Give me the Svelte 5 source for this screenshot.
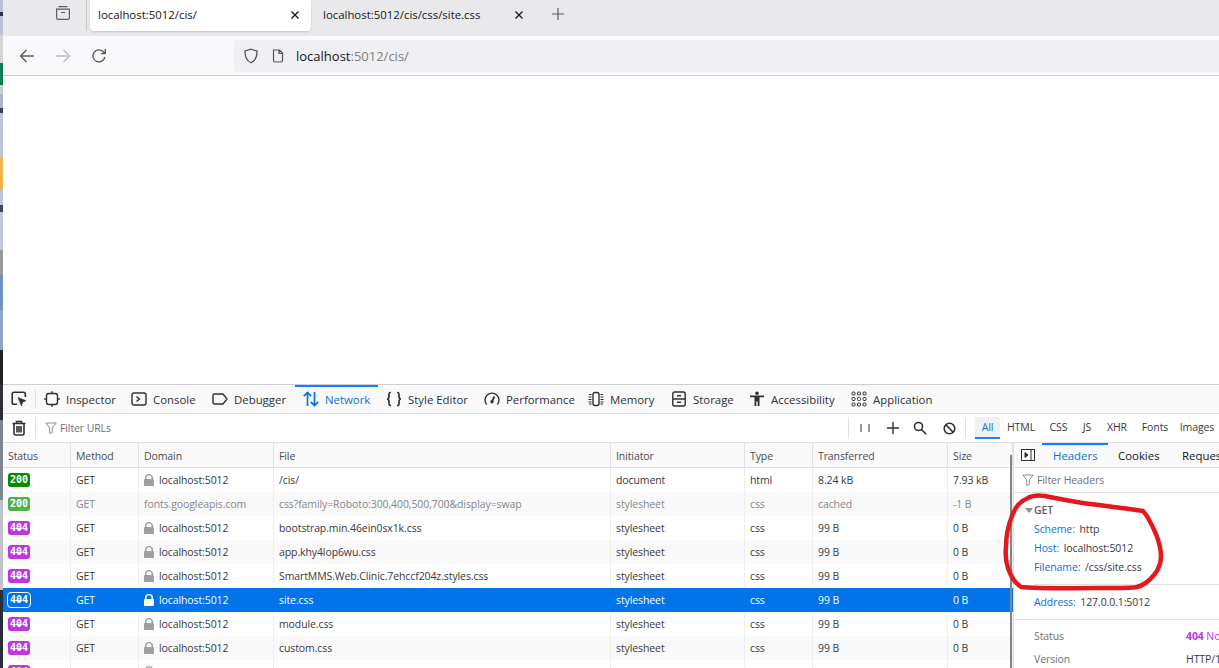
<script>
  const tools = [
    { n: 'Inspector', i: 'insp' }, { n: 'Console', i: 'cons' }, { n: 'Debugger', i: 'debug' },
    { n: 'Network', i: 'net', on: true }, { n: 'Style Editor', i: 'style' }, { n: 'Performance', i: 'perf' },
    { n: 'Memory', i: 'mem' }, { n: 'Storage', i: 'stor' }, { n: 'Accessibility', i: 'acc' }, { n: 'Application', i: 'app' }
  ];
  const filters = ['All', 'HTML', 'CSS', 'JS', 'XHR', 'Fonts', 'Images'];
  const cols = ['Status', 'Method', 'Domain', 'File', 'Initiator', 'Type', 'Transferred', 'Size'];
  const rows = [
    { s: '200', c: 'ok', d: 'localhost:5012', f: '/cis/', i: 'document', t: 'html', x: '8.24 kB', z: '7.93 kB' },
    { s: '200', c: 'okc', d: 'fonts.googleapis.com', f: 'css?family=Roboto:300,400,500,700&display=swap', i: 'stylesheet', t: 'css', x: 'cached', z: '-1 B', dim: true },
    { s: '404', c: 'nf', d: 'localhost:5012', f: 'bootstrap.min.46ein0sx1k.css', i: 'stylesheet', t: 'css', x: '99 B', z: '0 B' },
    { s: '404', c: 'nf', d: 'localhost:5012', f: 'app.khy4lop6wu.css', i: 'stylesheet', t: 'css', x: '99 B', z: '0 B' },
    { s: '404', c: 'nf', d: 'localhost:5012', f: 'SmartMMS.Web.Clinic.7ehccf204z.styles.css', i: 'stylesheet', t: 'css', x: '99 B', z: '0 B' },
    { s: '404', c: 'nf', d: 'localhost:5012', f: 'site.css', i: 'stylesheet', t: 'css', x: '99 B', z: '0 B', sel: true },
    { s: '404', c: 'nf', d: 'localhost:5012', f: 'module.css', i: 'stylesheet', t: 'css', x: '99 B', z: '0 B' },
    { s: '404', c: 'nf', d: 'localhost:5012', f: 'custom.css', i: 'stylesheet', t: 'css', x: '99 B', z: '0 B' },
    { s: '404', c: 'nf', d: 'localhost:5012', f: '', i: '', t: '', x: '', z: '', last: true }
  ];
</script>

<div class="screen">
  <div class="strip"></div>
  <div class="main">
    <div class="tabstrip">
      <svg class="archive" width="16" height="16" viewBox="0 0 16 16" fill="none" stroke="#5b5b66" stroke-width="1.2"><path d="M3.500 1.600h9M1.600 4.100h12.800v8.600a1.700 1.700 0 0 1-1.700 1.700H3.300a1.700 1.700 0 0 1-1.700-1.700zM6 7.500h4"/></svg>
      <div class="vsep"></div>
      <div class="tab active"><span>localhost:5012/cis/</span><svg width="10" height="10" viewBox="0 0 10 10" stroke="#15141a" stroke-width="1.3"><path d="M1.500 1.500l7 7M8.500 1.500l-7 7"/></svg></div>
      <div class="tab second"><span>localhost:5012/cis/css/site.css</span><svg width="10" height="10" viewBox="0 0 10 10" stroke="#15141a" stroke-width="1.3"><path d="M1.500 1.500l7 7M8.500 1.500l-7 7"/></svg></div>
      <svg class="plus" width="14" height="14" viewBox="0 0 14 14" stroke="#5b5b66" stroke-width="1.2"><path d="M7 1v12M1 7h12"/></svg>
    </div>

    <div class="navbar">
      <svg width="16" height="16" viewBox="0 0 16 16" fill="none" stroke="#5b5b66" stroke-width="1.4"><path d="M15 8H1.500M7.500 2L1.500 8l6 6"/></svg>
      <svg class="fwd" width="16" height="16" viewBox="0 0 16 16" fill="none" stroke="#bdbdc2" stroke-width="1.4"><path d="M1 8h13.500M8.500 2l6 6-6 6"/></svg>
      <svg class="reload" width="16" height="16" viewBox="0 0 16 16" fill="none" stroke="#5b5b66" stroke-width="1.4"><path d="M13.800 9a6 6 0 1 1-1.600-5.300L14 5.500M14.300 1v4.600H9.800"/></svg>
      <div class="urlbar">
        <svg width="16" height="16" viewBox="0 0 16 16" fill="none" stroke="#4f4f58" stroke-width="1.2"><path d="M8 1.200l6 1.800c.2 5.600-1.500 9.600-6 11.800C3.500 12.600 1.800 8.600 2 3z"/></svg>
        <svg class="page" width="14" height="14" viewBox="0 0 14 14" fill="none" stroke="#4f4f58" stroke-width="1.2"><path d="M2.500 1h6l3 3v7.500a1.500 1.500 0 0 1-1.500 1.500H4a1.500 1.500 0 0 1-1.500-1.500zM8 1v3.500h3.500"/></svg>
        <span class="url"><b>localhost</b>:5012/cis/</span>
      </div>
    </div>

    <div class="content"></div>

    <div class="devtools">
      <div class="tools">
        <div class="picker">
          <svg width="16" height="16" viewBox="0 0 16 16" fill="none" stroke="#2f2f36" stroke-width="1.6"><path d="M6 13.200H3a1.800 1.800 0 0 1-1.800-1.800V3A1.800 1.800 0 0 1 3 1.200h9.500A1.800 1.800 0 0 1 14.300 3v3"/><path d="M7 6.500l8 3.300-3.300 1.200L10.500 15z" fill="#2f2f36" stroke-width=".6"/></svg>
        </div>
        {#each tools as t}
          <div class="tool" class:on={t.on}>
            <svg width="16" height="16" viewBox="0 0 16 16" fill="none" stroke="currentColor" stroke-width="1.4">
              {#if t.i === 'insp'}
                <rect x="2.500" y="2.500" width="11" height="11" rx="2.500"/><path d="M8 .2v2.300M8 13.500v2.300M.2 8h2.300M13.500 8h2.300"/>
              {:else if t.i === 'cons'}
                <rect x="1" y="2" width="14" height="12" rx="2"/><path d="M5.500 5.500L8.500 8l-3 2.500"/>
              {:else if t.i === 'debug'}
                <path d="M1 4.500A1.500 1.500 0 0 1 2.500 3H11l4 5-4 5H2.500A1.500 1.500 0 0 1 1 11.500z"/>
              {:else if t.i === 'net'}
                <path stroke-width="1.700" d="M4.500 15V1.500M.8 5.200l3.700-3.700 3.700 3.700M11.500 1v13.500M7.800 10.800l3.700 3.700 3.700-3.700"/>
              {:else if t.i === 'style'}
                <path stroke-width="1.700" d="M5 1.500H4.300C3.200 1.500 3 2.300 3 3.300V6c0 1-.5 1.700-1.800 2C2.500 8.300 3 9 3 10v2.700c0 1 .2 1.800 1.300 1.800H5M11 1.500h.7c1.100 0 1.300.8 1.300 1.800V6c0 1 .5 1.700 1.800 2-1.300.3-1.800 1-1.800 2v2.700c0 1-.2 1.800-1.300 1.800H11"/>
              {:else if t.i === 'perf'}
                <path d="M2.500 13.500a7 7 0 1 1 11 0"/><path stroke-width="1.700" d="M8 10.500L10.500 5.500"/><circle cx="8" cy="10.800" r="1" fill="currentColor"/>
              {:else if t.i === 'mem'}
                <rect x="5" y="1.500" width="6" height="13" rx="2"/><path stroke-width="1" d="M1 3.500h2.500M.5 6h3M.5 8.500h3M.5 11h3M1 13h2.500M12.500 3.500H15M12.500 6h3M12.500 8.500h3M12.500 11h3M12.500 13H15"/>
              {:else if t.i === 'stor'}
                <rect x="1.800" y="1" width="12.400" height="14" rx="1.800"/><path d="M2 8h12M6 4.700h4M6 11.300h4"/>
              {:else if t.i === 'acc'}
                <circle cx="8" cy="2.200" r="1.800" fill="currentColor" stroke="none"/><path stroke="none" fill="currentColor" d="M1 4.500h14v1.800h-4.500V15H8.700v-4.500H7.300V15H5.500V6.300H1z"/>
              {:else}
                <g stroke-width="1"><rect x="1" y="1" width="3" height="3" rx="1"/><rect x="6.500" y="1" width="3" height="3" rx="1"/><rect x="12" y="1" width="3" height="3" rx="1"/><rect x="1" y="6.500" width="3" height="3" rx="1"/><rect x="6.500" y="6.500" width="3" height="3" rx="1"/><rect x="12" y="6.500" width="3" height="3" rx="1"/><rect x="1" y="12" width="3" height="3" rx="1"/><rect x="6.500" y="12" width="3" height="3" rx="1"/><rect x="12" y="12" width="3" height="3" rx="1"/></g>
              {/if}
            </svg>
            <span>{t.n}</span>
          </div>
        {/each}
      </div>

      <div class="toolbar">
        <svg class="trash" width="16" height="16" viewBox="0 0 16 16" fill="none" stroke="#2f2f36" stroke-width="1.600"><path d="M1.500 3.500h13M5.500 3.500V1.500h5v2M3 3.500v10.200A1.500 1.500 0 0 0 4.500 15h7a1.500 1.500 0 0 0 1.500-1.500V3.500M6 6v6.500M8 6v6.500M10 6v6.500"/></svg>
        <div class="tsep"></div>
        <svg class="funnel" width="12" height="12" viewBox="0 0 12 12" fill="none" stroke="#8f8f96" stroke-width="1"><path d="M.8 1h10.400L7.300 6v4.500l-2.600 1V6z"/></svg>
        <span class="filter">Filter URLs</span>
        <div class="tsep right"></div>
        <svg class="ic pause" width="12" height="12" viewBox="0 0 12 12" stroke="#2f2f36" stroke-width="1"><path d="M2 2v8M10 2v8"/></svg>
        <svg class="ic plus2" width="12" height="12" viewBox="0 0 12 12" stroke="#2f2f36" stroke-width="1.400"><path d="M6 0v12M0 6h12"/></svg>
        <svg class="ic search" width="14" height="14" viewBox="0 0 14 14" fill="none" stroke="#2f2f36" stroke-width="1.600"><circle cx="5.500" cy="5.500" r="4"/><path d="M8.500 8.500l4.700 4.700"/></svg>
        <svg class="ic block" width="13" height="13" viewBox="0 0 13 13" fill="none" stroke="#2f2f36" stroke-width="1.600"><circle cx="6.500" cy="6.500" r="5.300"/><path d="M2.800 2.800l7.400 7.400"/></svg>
        <div class="tsep fsep"></div>
        <div class="filters">
          {#each filters as f, n}
            <span class="fbtn" class:on={n === 0}>{f}</span>
          {/each}
        </div>
      </div>

      <div class="split">
        <div class="table">
          <div class="row head">
            {#each cols as c}<div class="cell">{c}</div>{/each}
          </div>
          {#each rows as r}
            <div class="row body" class:sel={r.sel} class:dim={r.dim}>
              <div class="cell"><span class="badge {r.c}">{r.s}</span></div>
              <div class="cell">{r.last ? '' : 'GET'}</div>
              <div class="cell dom">
                {#if !r.dim}
                  <svg width="10" height="12" viewBox="0 0 10 12"><path class="lock" d="M1 5V3.500a4 3.500 0 0 1 8 0V5h.2a.8.800 0 0 1 .8.800v5.400a.8.800 0 0 1-.8.800H.8a.8.800 0 0 1-.8-.8V5.800A.8.800 0 0 1 .8 5zM2.500 5h5V3.500a2.500 2.200 0 0 0-5 0z" fill-rule="evenodd"/></svg>
                {/if}
                {r.last ? '' : r.d}
              </div>
              <div class="cell">{r.f}</div>
              <div class="cell">{r.i}</div>
              <div class="cell">{r.t}</div>
              <div class="cell">{r.x}</div>
              <div class="cell">{r.z}</div>
            </div>
          {/each}
        </div>

        <div class="panel">
          <div class="ptabs">
            <svg class="toggle" width="14" height="12" viewBox="0 0 14 12" fill="none" stroke="#2f2f36" stroke-width="1"><rect x=".5" y=".5" width="13" height="11"/><path d="M10 .5v11"/><path d="M4 3.500L7 6 4 8.500z" fill="#2f2f36"/></svg>
            <span class="ptab on">Headers</span>
            <span class="ptab">Cookies</span>
            <span class="ptab">Request</span>
          </div>
          <div class="pfilter">
            <svg width="12" height="12" viewBox="0 0 12 12" fill="none" stroke="#8f8f96" stroke-width="1"><path d="M.8 1h10.400L7.300 6v4.500l-2.600 1V6z"/></svg>
            <span>Filter Headers</span>
          </div>
          <div class="summary">
            <div class="get"><i></i>GET</div>
            <div class="kv"><em>Scheme:</em> http</div>
            <div class="kv"><em>Host:</em> localhost:5012</div>
            <div class="kv"><em>Filename:</em> /css/site.css</div>
          </div>
          <div class="address"><em>Address:</em> 127.0.0.1:5012</div>
          <div class="status">
            <div class="st"><span>Status</span><b>404 <u>Not Found</u></b></div>
            <div class="st"><span>Version</span><strong>HTTP/1.1</strong></div>
          </div>
        </div>
      </div>
      <div class="thumb"></div>
    </div>
  </div>

  <svg class="scribble" width="229" height="178" viewBox="0 0 229 178" fill="none" stroke="#e3191f" stroke-width="4.500" stroke-linecap="round" stroke-linejoin="round">
    <path d="M55 6C48 5 43 5 38 8C30 11 26 16 22 26C18 36 16 46 16 57C15 66 16 72 18 78C21 87 25 93 31 97C50 99 100 98 125 98C135 98 141 98 147 97C155 95 160 90 164 85C169 79 171 73 171 66C171 58 169 52 166 44C162 35 158 26 153 21C135 18 115 16 100 14C85 12 70 9 55 6"/>
  </svg>
</div>

<style>
  :global(body) { margin: 0; overflow: hidden; background: #fff; }
  .screen { position: relative; display: flex; width: 1219px; height: 668px; overflow: hidden; font-family: "Open Sans", "Noto Sans", sans-serif; color: #38383d; }
  .strip { width: 3px; flex: none; background: linear-gradient(180deg, #b9c3d6 0 12px, #2f3340 12px 16px, #b9c3d6 16px 35px, #d5d5d5 35px 63px, #0a8050 63px 85px, #ccc 85px 94px, #a9b6cd 94px 108px, #39405a 108px 113px, #bcc6d8 113px 158px, #eab54a 158px 190px, #bcc6d8 190px 205px, #3a4560 205px 212px, #c0c8d8 212px 250px, #9a9a9a 250px 275px, #6f93c0 275px 310px, #8ea5c7 310px 350px, #222 350px 384px, #2b3038 384px 420px, #7c8590 420px 500px, #bfc3c9 500px 590px, #2a2e38 590px 668px); }
  .main { flex: 1; min-width: 0; display: flex; flex-direction: column; }

  .tabstrip { height: 36px; flex: none; background: #e9e9ec; display: flex; align-items: flex-start; padding-left: 52px; box-sizing: border-box; }
  .archive { margin-top: 5px; }
  .vsep { width: 1px; height: 31px; background: #c8c8cc; margin-left: 15px; margin-right: 3px; }
  .tab { display: flex; align-items: center; height: 31px; padding-bottom: 2px; font-size: 11.4px; color: #15141a; box-sizing: border-box; }
  .tab span { flex: 1; white-space: nowrap; }
  .tab.active { width: 221px; padding-left: 8px; padding-right: 11px; background: #fff; border-radius: 0 0 4px 4px; box-shadow: 0 1px 2px rgba(0,0,0,.15); }
  .tab.second { width: 213px; padding-left: 12px; }
  .plus { margin-left: 27px; margin-top: 7px; }

  .navbar { height: 40px; flex: none; display: flex; align-items: center; background: #f9f9fb; padding-left: 16px; box-sizing: border-box; border-bottom: 1px solid #d0d0d4; }
  .fwd { margin-left: 20px; }
  .reload { margin-left: 20px; }
  .urlbar { margin-left: 127px; flex: 1; height: 32px; background: #f0f0f4; border-radius: 4px 0 0 4px; display: flex; align-items: center; padding-left: 9px; }
  .page { margin-left: 12px; }
  .url { margin-left: 11px; font-size: 13px; color: #7d7d85; }
  .url b { font-weight: 400; color: #15141a; }

  .content { flex: 1; background: #fff; }

  .devtools { position: relative; height: 283px; flex: none; border-top: 1px solid #cfcfd3; font-size: 10.5px; letter-spacing: -.1px; display: flex; flex-direction: column; }
  .tools { height: 28px; flex: none; background: #f9f9fa; border-bottom: 1px solid #e0e0e2; display: grid; grid-template-columns: 33px 87px 81px 91px 83px 98px 104px 83px 78px 102px 1fr; align-items: stretch; font-size: 11.4px; letter-spacing: 0; color: #2f2f36; }
  .picker { display: flex; align-items: center; padding-left: 8px; position: relative; }
  .picker::after { content: ""; position: absolute; right: 0; top: 4px; bottom: 4px; width: 1px; background: #e0e0e2; }
  .tool { display: flex; align-items: center; gap: 6px; padding-left: 8px; white-space: nowrap; box-sizing: border-box; }
  .tool.on { color: #0a6fe0; box-shadow: inset 0 2px 0 #0a84ff; }

  .toolbar { height: 28px; flex: none; background: #fff; border-bottom: 1px solid #e0e0e2; display: flex; align-items: center; position: relative; }
  .trash { margin-left: 8px; }
  .tsep { width: 1px; height: 20px; background: #e0e0e2; margin-left: 8px; }
  .funnel { margin-left: 9px; }
  .filter { margin-left: 3px; color: #6f6f76; }
  .tsep.right { margin-left: auto; }
  .ic { flex: none; }
  .pause { margin-left: 10px; }
  .plus2 { margin-left: 16px; }
  .search { margin-left: 14px; }
  .block { margin-left: 16px; }
  .fsep { margin-left: 9px; }
  .filters { display: grid; grid-template-columns: 25px 42px 33px 24px 36px 40px 44px; margin-left: 9px; width: 244px; height: 22px; align-items: center; text-align: center; flex: none; }
  .fbtn { height: 22px; line-height: 21px; box-sizing: border-box; white-space: nowrap; }
  .fbtn.on { color: #0a6fe0; background: #f0f0f4; border-bottom: 2px solid #0a84ff; border-radius: 2px 2px 0 0; }

  .split { flex: 1; display: flex; min-height: 0; }
  .table { width: 1010px; flex: none; overflow: hidden; }
  .row { display: grid; grid-template-columns: 68px 68px 135px 337px 134px 68px 135px 65px; height: 24px; }
  .row.head { height: 25px; background: #f9f9fa; border-bottom: 1px solid #e0e0e2; box-sizing: border-box; color: #4a4a4f; }
  .row.body:nth-child(odd) { background: #f9f9fa; }
  .cell { display: flex; align-items: center; padding-left: 5px; border-right: 1px solid #eeeeef; white-space: nowrap; overflow: hidden; box-sizing: border-box; gap: 5px; }
  .head .cell { border-right-color: #e0e0e2; padding-top: 2px; }
  .row.dim .cell { color: #85858b; }
  .row.body.sel { background: #0074e8; }
  .row.body.sel .cell { color: #fff; border-right-color: #0074e8; }
  .lock { fill: #a0a0a4; }
  .sel .lock { fill: #fff; }
  .badge { position: relative; display: block; width: 22px; height: 14px; border-radius: 3px; color: #fff; font: 700 10px/14px "DejaVu Sans Mono", monospace; letter-spacing: 0; text-align: center; box-sizing: border-box; }
  .badge.ok { background: #058b00; }
  .badge.okc { background: #4fb04c; }
  .badge.nf { background: #c135e0; }
  .badge.nf::after { content: ""; position: absolute; left: 8px; right: 8px; top: 7px; height: 1px; background: #fff; }
  .sel .badge.nf { outline: 1px solid #fff; background: #0074e8; }

  .panel { flex: 1; min-width: 0; border-left: 1px solid #e0e0e2; overflow: hidden; background: #fff; }
  .ptabs { height: 25px; box-sizing: border-box; border-bottom: 1px solid #e0e0e2; background: #f9f9fa; display: grid; grid-template-columns: 28px 66px 64px 1fr; align-items: stretch; font-size: 11.4px; letter-spacing: 0; color: #15141a; white-space: nowrap; }
  .toggle { align-self: center; margin-left: 7px; }
  .ptab { display: flex; align-items: center; padding-left: 10px; }
  .ptab.on { color: #0a6fe0; box-shadow: inset 0 2px 0 #0a84ff; padding-left: 11px; }
  .pfilter { height: 25px; box-sizing: border-box; border-bottom: 1px solid #e0e0e2; display: flex; align-items: center; gap: 3px; padding-left: 8px; color: #6f6f76; }
  .summary { margin-left: 20px; padding-top: 8px; height: 92px; box-sizing: border-box; border-bottom: 1px solid #e0e0e2; color: #38383d; }
  .get { height: 19px; line-height: 18px; font-weight: 600; color: #5a5a62; position: relative; }
  .get i { position: absolute; left: -9px; top: 7px; border: 4px solid transparent; border-top: 5px solid #8f8f96; border-bottom: 0; }
  .kv { height: 19px; line-height: 19px; white-space: nowrap; }
  em { font-style: normal; color: #0a6fe0; margin-right: 2px; }
  .address { height: 35px; box-sizing: border-box; padding: 10px 0 0 20px; border-bottom: 1px solid #e0e0e2; }
  .status { padding: 6px 0 0 20px; }
  .st { display: grid; grid-template-columns: 152px 1fr; height: 23px; line-height: 21px; white-space: nowrap; color: #6f6f76; }
  .st b { color: #c135e0; font-weight: 700; }
  .st b u { text-decoration: none; font-weight: 400; }
  .st strong { font-weight: 400; color: #38383d; }

  .thumb { position: absolute; left: 1007px; top: 70px; bottom: 0; width: 2px; background: #858585; }
  .scribble { position: absolute; left: 990px; top: 490px; }
</style>
